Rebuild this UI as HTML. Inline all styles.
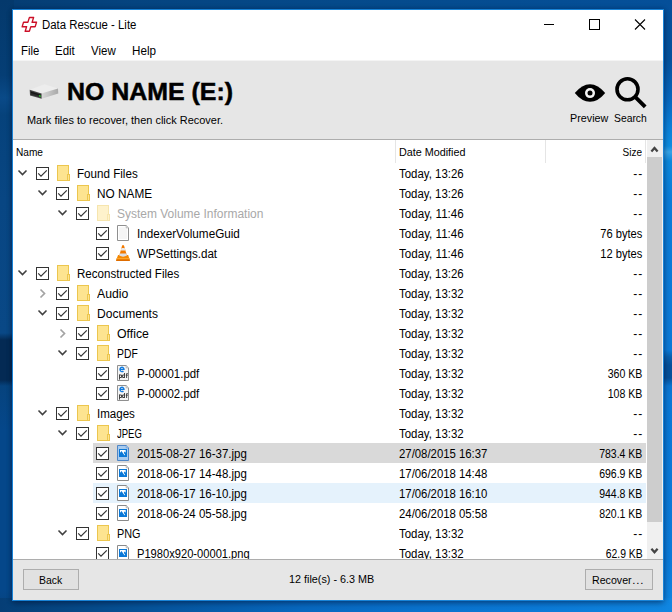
<!DOCTYPE html>
<html><head><meta charset="utf-8"><title>Data Rescue - Lite</title>
<style>
html,body{margin:0;padding:0}
body{width:672px;height:612px;overflow:hidden;position:relative;font-family:"Liberation Sans",sans-serif;background:#0a5fb0}
.a{position:absolute;display:block}
.t{position:absolute;white-space:nowrap;font-family:"Liberation Sans",sans-serif}
.bg{position:absolute}
</style></head><body>

<div class="bg" style="left:0;top:0;width:672px;height:612px;background:linear-gradient(90deg,#053c72 0%,#054480 20%,#054a8b 50%,#05509a 100%)"></div>
<div class="bg" style="left:0;top:0;width:14px;height:612px;background:linear-gradient(180deg,#04396c 0px,#053e75 75px,#0a4a88 98px,#06427b 115px,#084683 200px,#094886 333px,#042a54 340px,#042a54 380px,#06437e 386px,#05478a 430px,#05478a 590px,#06427c 612px)"></div>
<div class="bg" style="left:660px;top:0;width:12px;height:612px;background:linear-gradient(180deg,#054f99 0px,#05529d 60px,#0868bf 100px,#0b80d8 128px,#0e8cdf 146px,#36a2e6 152px,#0d88dc 161px,#0a7cd8 200px,#0a79d7 350px,#0860ad 357px,#05509a 365px,#05509a 378px,#0a74d0 386px,#0a78d6 395px,#0b7ad8 560px,#1086e1 612px)"></div>
<div class="bg" style="left:0;top:598px;width:672px;height:14px;background:linear-gradient(90deg,#053e76 0%,#064784 10%,#06569f 25%,#0868bf 45%,#0a72cd 62%,#0b7ad7 80%,#1086e1 100%)"></div>
<div class="bg" style="left:13px;top:10px;width:650px;height:590px;box-shadow:0 0 5px 1px rgba(0,8,35,.3),0 3px 6px 0 rgba(0,8,35,.35)"></div>
<div class="bg" style="left:12px;top:9px;width:652px;height:592px;background:#1883d7"></div>
<div class="bg" style="left:13px;top:10px;width:650px;height:590px;background:#fff"></div>
<svg class="a" style="left:18px;top:13px" width="24" height="22" viewBox="18 13 24 22"><g transform="translate(29.4,24.3) skewX(-17)"><path d="M-2.1 -6.8 H2.1 V-2.0 H6.5 V2.4 H2.1 V6.9 H-2.1 V2.4 H-6.5 V-2.0 H-2.1 Z" fill="#fff" stroke="#cc0f27" stroke-width="1.4" stroke-linejoin="round"/></g></svg>
<div class="t" style="left:41.60px;transform-origin:0 50%;top:15.20px;font-size:12px;line-height:20px;transform:scaleX(0.9498);color:#000;font-weight:normal;">Data Rescue - Lite</div>
<svg class="a" style="left:543px;top:17.6px" width="104" height="13" viewBox="0 0 104 13"><path d="M1 6.5 H11" stroke="#000" stroke-width="1"/><rect x="46.5" y="1.5" width="10" height="10" fill="none" stroke="#000" stroke-width="1"/><path d="M92 1.5 L102 11.5 M102 1.5 L92 11.5" stroke="#000" stroke-width="1.1"/></svg>
<div class="t" style="left:20.60px;transform-origin:0 50%;top:40.50px;font-size:12px;line-height:20px;transform:scaleX(0.946);color:#000;font-weight:normal;">File</div>
<div class="t" style="left:55.30px;transform-origin:0 50%;top:40.50px;font-size:12px;line-height:20px;transform:scaleX(0.9571);color:#000;font-weight:normal;">Edit</div>
<div class="t" style="left:91.30px;transform-origin:0 50%;top:40.50px;font-size:12px;line-height:20px;transform:scaleX(0.9575);color:#000;font-weight:normal;">View</div>
<div class="t" style="left:131.90px;transform-origin:0 50%;top:40.50px;font-size:12px;line-height:20px;transform:scaleX(0.9722);color:#000;font-weight:normal;">Help</div>
<div class="bg" style="left:13px;top:61px;width:650px;height:78px;background:#e6e6e6"></div>
<div class="bg" style="left:13px;top:60px;width:650px;height:1px;background:#f4f4f4"></div>
<div class="bg" style="left:13px;top:139px;width:650px;height:1px;background:#adadad"></div>
<svg class="a" style="left:28px;top:82px" width="32" height="18" viewBox="0 0 32 18"><defs><linearGradient id="dg" x1="0" y1="0" x2="1" y2="0"><stop offset="0" stop-color="#d8d8d8"/><stop offset="1" stop-color="#a9a9a9"/></linearGradient></defs><path d="M1.7 7.8 L16.5 2.2 L30 6.6 L13.6 11.5 Z" fill="#ededed"/><path d="M13.6 11.5 L30 6.6 L30.3 11.4 L13.6 16.7 Z" fill="url(#dg)"/><path d="M1.7 7.8 L13.6 11.5 L13.6 16.7 L2 13.4 Z" fill="#4a4a4a"/><path d="M2.5 8.9 L12.9 12.2 L12.9 15.6 L2.7 12.7 Z" fill="#2a2a2a"/><path d="M2.9 9.8 L12.5 12.8 L12.5 13.7 L3 10.9 Z" fill="#151515"/><path d="M10.9 13.0 L12.8 13.6 L12.8 15.0 L10.9 14.4 Z" fill="#2fc02f"/></svg>
<div class="t" style="left:66.90px;transform-origin:0 50%;top:76.00px;font-size:24px;line-height:32px;transform:scaleX(1.0376);color:#000;font-weight:bold;-webkit-text-stroke:0.5px #000;">NO NAME (E:)</div>
<div class="t" style="left:27.00px;transform-origin:0 50%;top:109.80px;font-size:11.3px;line-height:20px;transform:scaleX(0.9695);color:#000;font-weight:normal;">Mark files to recover, then click Recover.</div>
<svg class="a" style="left:574px;top:83px" width="32" height="20" viewBox="0 0 32 20"><path d="M0.8 10 Q8 1.2 16 1.2 Q24 1.2 31.2 10 Q24 18.8 16 18.8 Q8 18.8 0.8 10 Z" fill="#000"/><circle cx="16" cy="10.1" r="5.0" fill="#f4f4f4"/><circle cx="16" cy="10.1" r="2.5" fill="#000"/></svg>
<svg class="a" style="left:613px;top:75px" width="34" height="34" viewBox="0 0 34 34"><circle cx="14.5" cy="14.3" r="10.5" fill="none" stroke="#000" stroke-width="3.6"/><path d="M21.9 21.7 L32.2 31.9" stroke="#000" stroke-width="3.9" stroke-linecap="butt"/></svg>
<div class="t" style="left:570.30px;transform-origin:0 50%;top:107.70px;font-size:11.3px;line-height:20px;transform:scaleX(0.953);color:#000;font-weight:normal;">Preview</div>
<div class="t" style="left:614.30px;transform-origin:0 50%;top:107.70px;font-size:11.3px;line-height:20px;transform:scaleX(0.9163);color:#000;font-weight:normal;">Search</div>
<div class="bg" style="left:13px;top:140px;width:634px;height:419px;background:#fff"></div>
<div class="t" style="left:15.90px;transform-origin:0 50%;top:142.00px;font-size:11.3px;line-height:20px;transform:scaleX(0.8958);color:#000;font-weight:normal;">Name</div>
<div class="t" style="left:399.30px;transform-origin:0 50%;top:142.00px;font-size:11.3px;line-height:20px;transform:scaleX(0.954);color:#000;font-weight:normal;">Date Modified</div>
<div class="t" style="right:30.20px;transform-origin:100% 50%;top:142.00px;font-size:11.3px;line-height:20px;transform:scaleX(0.887);color:#000;font-weight:normal;">Size</div>
<div class="bg" style="left:395px;top:140px;width:1px;height:23px;background:#e5e5e5"></div>
<div class="bg" style="left:545px;top:140px;width:1px;height:23px;background:#e5e5e5"></div>
<div class="bg" style="left:645px;top:140px;width:1px;height:23px;background:#e5e5e5"></div>
<svg class="a" style="left:17px;top:169px" width="11" height="8" viewBox="0 0 11 8"><path d="M1.5 1.5 L5.5 5.5 L9.5 1.5" fill="none" stroke="#404040" stroke-width="1.6"/></svg>
<svg class="a" style="left:36px;top:167px" width="13" height="13" viewBox="0 0 13 13"><rect x="0.5" y="0.5" width="12" height="12" fill="#fff" stroke="#333" stroke-width="1"/><path d="M2.2 6.4 L5 9.2 L10.8 3.4" fill="none" stroke="#333" stroke-width="1.2"/></svg>
<svg class="a" style="left:57px;top:165px" width="14" height="16" viewBox="0 0 14 16"><rect x="0.5" y="0.5" width="11" height="15" fill="#fde490" stroke="#ecc64e"/><rect x="10.5" y="9.5" width="2" height="6" fill="#fde490" stroke="#ecc64e"/></svg>
<div class="t" style="left:77.00px;transform-origin:0 50%;top:164.00px;font-size:12px;line-height:20px;transform:scaleX(0.9681);color:#000;font-weight:normal;">Found Files</div>
<div class="t" style="left:399.30px;transform-origin:0 50%;top:164.00px;font-size:12px;line-height:20px;transform:scaleX(0.9539);color:#000;font-weight:normal;">Today, 13:26</div>
<div class="t" style="right:28.7px;top:164.00px;font-size:12px;line-height:20px;letter-spacing:1px">--</div>
<svg class="a" style="left:37px;top:189px" width="11" height="8" viewBox="0 0 11 8"><path d="M1.5 1.5 L5.5 5.5 L9.5 1.5" fill="none" stroke="#404040" stroke-width="1.6"/></svg>
<svg class="a" style="left:56px;top:187px" width="13" height="13" viewBox="0 0 13 13"><rect x="0.5" y="0.5" width="12" height="12" fill="#fff" stroke="#333" stroke-width="1"/><path d="M2.2 6.4 L5 9.2 L10.8 3.4" fill="none" stroke="#333" stroke-width="1.2"/></svg>
<svg class="a" style="left:77px;top:185px" width="14" height="16" viewBox="0 0 14 16"><rect x="0.5" y="0.5" width="11" height="15" fill="#fde490" stroke="#ecc64e"/><rect x="10.5" y="9.5" width="2" height="6" fill="#fde490" stroke="#ecc64e"/></svg>
<div class="t" style="left:97.00px;transform-origin:0 50%;top:184.00px;font-size:12px;line-height:20px;transform:scaleX(0.9837);color:#000;font-weight:normal;">NO NAME</div>
<div class="t" style="left:399.30px;transform-origin:0 50%;top:184.00px;font-size:12px;line-height:20px;transform:scaleX(0.9539);color:#000;font-weight:normal;">Today, 13:26</div>
<div class="t" style="right:28.7px;top:184.00px;font-size:12px;line-height:20px;letter-spacing:1px">--</div>
<svg class="a" style="left:57px;top:209px" width="11" height="8" viewBox="0 0 11 8"><path d="M1.5 1.5 L5.5 5.5 L9.5 1.5" fill="none" stroke="#404040" stroke-width="1.6"/></svg>
<svg class="a" style="left:76px;top:207px" width="13" height="13" viewBox="0 0 13 13"><rect x="0.5" y="0.5" width="12" height="12" fill="#fff" stroke="#333" stroke-width="1"/><path d="M2.2 6.4 L5 9.2 L10.8 3.4" fill="none" stroke="#333" stroke-width="1.2"/></svg>
<svg class="a" style="left:97px;top:205px" width="14" height="16" viewBox="0 0 14 16" opacity="0.45"><rect x="0.5" y="0.5" width="11" height="15" fill="#fde490" stroke="#ecc64e"/><rect x="10.5" y="9.5" width="2" height="6" fill="#fde490" stroke="#ecc64e"/></svg>
<div class="t" style="left:117.00px;transform-origin:0 50%;top:204.00px;font-size:12px;line-height:20px;transform:scaleX(0.9977);color:#a8a8a8;font-weight:normal;">System Volume Information</div>
<div class="t" style="left:399.30px;transform-origin:0 50%;top:204.00px;font-size:12px;line-height:20px;transform:scaleX(0.9666);color:#000;font-weight:normal;">Today, 11:46</div>
<div class="t" style="right:28.7px;top:204.00px;font-size:12px;line-height:20px;letter-spacing:1px">--</div>
<svg class="a" style="left:96px;top:227px" width="13" height="13" viewBox="0 0 13 13"><rect x="0.5" y="0.5" width="12" height="12" fill="#fff" stroke="#333" stroke-width="1"/><path d="M2.2 6.4 L5 9.2 L10.8 3.4" fill="none" stroke="#333" stroke-width="1.2"/></svg>
<svg class="a" style="left:117px;top:225px" width="12" height="16" viewBox="0 0 12 16"><path d="M0.5 0.5 H9.2 L11.5 2.8 V15.5 H0.5 Z" fill="#fff" stroke="#8f8f8f"/><rect x="2" y="2.2" width="8" height="11.8" fill="#f5f5f5"/><path d="M9.2 0.5 V2.8 H11.5" fill="#fff" stroke="#b5b5b5"/></svg>
<div class="t" style="left:137.00px;transform-origin:0 50%;top:224.00px;font-size:12px;line-height:20px;transform:scaleX(0.9762);color:#000;font-weight:normal;">IndexerVolumeGuid</div>
<div class="t" style="left:399.30px;transform-origin:0 50%;top:224.00px;font-size:12px;line-height:20px;transform:scaleX(0.9666);color:#000;font-weight:normal;">Today, 11:46</div>
<div class="t" style="right:29.50px;transform-origin:100% 50%;top:224.00px;font-size:12px;line-height:20px;transform:scaleX(0.9278);color:#000;font-weight:normal;">76 bytes</div>
<svg class="a" style="left:96px;top:247px" width="13" height="13" viewBox="0 0 13 13"><rect x="0.5" y="0.5" width="12" height="12" fill="#fff" stroke="#333" stroke-width="1"/><path d="M2.2 6.4 L5 9.2 L10.8 3.4" fill="none" stroke="#333" stroke-width="1.2"/></svg>
<svg class="a" style="left:116px;top:245px" width="14" height="16" viewBox="0 0 14 16"><path d="M2.1 9.9 H12.2 L13.9 15.2 Q13.9 15.9 13.2 15.9 H0.8 Q0.1 15.9 0.1 15.2 Z" fill="#f58800"/><path d="M0.7 13.0 H13.3 L13.7 14.3 H0.3 Z" fill="#fba42a"/><path d="M0.3 14.4 H13.7 L13.9 15.2 Q13.9 15.9 13.2 15.9 H0.8 Q0.1 15.9 0.1 15.2 Z" fill="#de6c00"/><path d="M6.2 0.2 H7.9 L10.9 10.5 Q7 12.7 3.3 10.5 Z" fill="#f27a00"/><path d="M5.5 2.9 H8.7 L9.5 5.4 H4.7 Z" fill="#e8e9ec"/><path d="M3.9 8.5 H10.4 L11.0 10.6 Q7.1 12.9 3.2 10.6 Z" fill="#dcdfe5"/></svg>
<div class="t" style="left:137.00px;transform-origin:0 50%;top:244.00px;font-size:12px;line-height:20px;transform:scaleX(0.9683);color:#000;font-weight:normal;">WPSettings.dat</div>
<div class="t" style="left:399.30px;transform-origin:0 50%;top:244.00px;font-size:12px;line-height:20px;transform:scaleX(0.9666);color:#000;font-weight:normal;">Today, 11:46</div>
<div class="t" style="right:29.50px;transform-origin:100% 50%;top:244.00px;font-size:12px;line-height:20px;transform:scaleX(0.9278);color:#000;font-weight:normal;">12 bytes</div>
<svg class="a" style="left:17px;top:269px" width="11" height="8" viewBox="0 0 11 8"><path d="M1.5 1.5 L5.5 5.5 L9.5 1.5" fill="none" stroke="#404040" stroke-width="1.6"/></svg>
<svg class="a" style="left:36px;top:267px" width="13" height="13" viewBox="0 0 13 13"><rect x="0.5" y="0.5" width="12" height="12" fill="#fff" stroke="#333" stroke-width="1"/><path d="M2.2 6.4 L5 9.2 L10.8 3.4" fill="none" stroke="#333" stroke-width="1.2"/></svg>
<svg class="a" style="left:57px;top:265px" width="14" height="16" viewBox="0 0 14 16"><rect x="0.5" y="0.5" width="11" height="15" fill="#fde490" stroke="#ecc64e"/><rect x="10.5" y="9.5" width="2" height="6" fill="#fde490" stroke="#ecc64e"/></svg>
<div class="t" style="left:77.00px;transform-origin:0 50%;top:264.00px;font-size:12px;line-height:20px;transform:scaleX(0.9647);color:#000;font-weight:normal;">Reconstructed Files</div>
<div class="t" style="left:399.30px;transform-origin:0 50%;top:264.00px;font-size:12px;line-height:20px;transform:scaleX(0.9539);color:#000;font-weight:normal;">Today, 13:26</div>
<div class="t" style="right:28.7px;top:264.00px;font-size:12px;line-height:20px;letter-spacing:1px">--</div>
<svg class="a" style="left:39.3px;top:288px" width="8" height="11" viewBox="0 0 8 11"><path d="M1.5 1.5 L5.5 5.5 L1.5 9.5" fill="none" stroke="#a3a3a3" stroke-width="1.7"/></svg>
<svg class="a" style="left:56px;top:287px" width="13" height="13" viewBox="0 0 13 13"><rect x="0.5" y="0.5" width="12" height="12" fill="#fff" stroke="#333" stroke-width="1"/><path d="M2.2 6.4 L5 9.2 L10.8 3.4" fill="none" stroke="#333" stroke-width="1.2"/></svg>
<svg class="a" style="left:77px;top:285px" width="14" height="16" viewBox="0 0 14 16"><rect x="0.5" y="0.5" width="11" height="15" fill="#fde490" stroke="#ecc64e"/><rect x="10.5" y="9.5" width="2" height="6" fill="#fde490" stroke="#ecc64e"/></svg>
<div class="t" style="left:97.00px;transform-origin:0 50%;top:284.00px;font-size:12px;line-height:20px;transform:scaleX(1.0194);color:#000;font-weight:normal;">Audio</div>
<div class="t" style="left:399.30px;transform-origin:0 50%;top:284.00px;font-size:12px;line-height:20px;transform:scaleX(0.9539);color:#000;font-weight:normal;">Today, 13:32</div>
<div class="t" style="right:28.7px;top:284.00px;font-size:12px;line-height:20px;letter-spacing:1px">--</div>
<svg class="a" style="left:37px;top:309px" width="11" height="8" viewBox="0 0 11 8"><path d="M1.5 1.5 L5.5 5.5 L9.5 1.5" fill="none" stroke="#404040" stroke-width="1.6"/></svg>
<svg class="a" style="left:56px;top:307px" width="13" height="13" viewBox="0 0 13 13"><rect x="0.5" y="0.5" width="12" height="12" fill="#fff" stroke="#333" stroke-width="1"/><path d="M2.2 6.4 L5 9.2 L10.8 3.4" fill="none" stroke="#333" stroke-width="1.2"/></svg>
<svg class="a" style="left:77px;top:305px" width="14" height="16" viewBox="0 0 14 16"><rect x="0.5" y="0.5" width="11" height="15" fill="#fde490" stroke="#ecc64e"/><rect x="10.5" y="9.5" width="2" height="6" fill="#fde490" stroke="#ecc64e"/></svg>
<div class="t" style="left:97.00px;transform-origin:0 50%;top:304.00px;font-size:12px;line-height:20px;transform:scaleX(1.0049);color:#000;font-weight:normal;">Documents</div>
<div class="t" style="left:399.30px;transform-origin:0 50%;top:304.00px;font-size:12px;line-height:20px;transform:scaleX(0.9539);color:#000;font-weight:normal;">Today, 13:32</div>
<div class="t" style="right:28.7px;top:304.00px;font-size:12px;line-height:20px;letter-spacing:1px">--</div>
<svg class="a" style="left:59.3px;top:328px" width="8" height="11" viewBox="0 0 8 11"><path d="M1.5 1.5 L5.5 5.5 L1.5 9.5" fill="none" stroke="#a3a3a3" stroke-width="1.7"/></svg>
<svg class="a" style="left:76px;top:327px" width="13" height="13" viewBox="0 0 13 13"><rect x="0.5" y="0.5" width="12" height="12" fill="#fff" stroke="#333" stroke-width="1"/><path d="M2.2 6.4 L5 9.2 L10.8 3.4" fill="none" stroke="#333" stroke-width="1.2"/></svg>
<svg class="a" style="left:97px;top:325px" width="14" height="16" viewBox="0 0 14 16"><rect x="0.5" y="0.5" width="11" height="15" fill="#fde490" stroke="#ecc64e"/><rect x="10.5" y="9.5" width="2" height="6" fill="#fde490" stroke="#ecc64e"/></svg>
<div class="t" style="left:117.00px;transform-origin:0 50%;top:324.00px;font-size:12px;line-height:20px;transform:scaleX(1.0249);color:#000;font-weight:normal;">Office</div>
<div class="t" style="left:399.30px;transform-origin:0 50%;top:324.00px;font-size:12px;line-height:20px;transform:scaleX(0.9539);color:#000;font-weight:normal;">Today, 13:32</div>
<div class="t" style="right:28.7px;top:324.00px;font-size:12px;line-height:20px;letter-spacing:1px">--</div>
<svg class="a" style="left:57px;top:349px" width="11" height="8" viewBox="0 0 11 8"><path d="M1.5 1.5 L5.5 5.5 L9.5 1.5" fill="none" stroke="#404040" stroke-width="1.6"/></svg>
<svg class="a" style="left:76px;top:347px" width="13" height="13" viewBox="0 0 13 13"><rect x="0.5" y="0.5" width="12" height="12" fill="#fff" stroke="#333" stroke-width="1"/><path d="M2.2 6.4 L5 9.2 L10.8 3.4" fill="none" stroke="#333" stroke-width="1.2"/></svg>
<svg class="a" style="left:97px;top:345px" width="14" height="16" viewBox="0 0 14 16"><rect x="0.5" y="0.5" width="11" height="15" fill="#fde490" stroke="#ecc64e"/><rect x="10.5" y="9.5" width="2" height="6" fill="#fde490" stroke="#ecc64e"/></svg>
<div class="t" style="left:117.00px;transform-origin:0 50%;top:344.00px;font-size:12px;line-height:20px;transform:scaleX(0.8625);color:#000;font-weight:normal;">PDF</div>
<div class="t" style="left:399.30px;transform-origin:0 50%;top:344.00px;font-size:12px;line-height:20px;transform:scaleX(0.9539);color:#000;font-weight:normal;">Today, 13:32</div>
<div class="t" style="right:28.7px;top:344.00px;font-size:12px;line-height:20px;letter-spacing:1px">--</div>
<svg class="a" style="left:96px;top:367px" width="13" height="13" viewBox="0 0 13 13"><rect x="0.5" y="0.5" width="12" height="12" fill="#fff" stroke="#333" stroke-width="1"/><path d="M2.2 6.4 L5 9.2 L10.8 3.4" fill="none" stroke="#333" stroke-width="1.2"/></svg>
<svg class="a" style="left:117px;top:365px" width="12" height="16" viewBox="0 0 12 16"><path d="M0.5 0.5 H9.2 L11.5 2.8 V15.5 H0.5 Z" fill="#f4f4f4" stroke="#8f8f8f"/><path d="M9.2 0.5 V2.8 H11.5" fill="#fff" stroke="#b5b5b5"/><path d="M3.1 4.4 H7.0 A2.0 2.2 0 1 0 6.4 6.0" fill="none" stroke="#0f7ae0" stroke-width="1.35"/><path d="M2.5 9.5 V14.6 M2.5 10 H4.5 V12.5 H2.5 M7.5 8 V13 M7.5 10 H5.6 V12.5 H7.5 M9.6 13 V8.6 H10.8 M8.8 10.2 H10.8" fill="none" stroke="#3c3c3c" stroke-width="0.95"/></svg>
<div class="t" style="left:137.00px;transform-origin:0 50%;top:364.00px;font-size:12px;line-height:20px;transform:scaleX(0.9527);color:#000;font-weight:normal;">P-00001.pdf</div>
<div class="t" style="left:399.30px;transform-origin:0 50%;top:364.00px;font-size:12px;line-height:20px;transform:scaleX(0.9539);color:#000;font-weight:normal;">Today, 13:32</div>
<div class="t" style="right:29.50px;transform-origin:100% 50%;top:364.00px;font-size:12px;line-height:20px;transform:scaleX(0.8813);color:#000;font-weight:normal;">360 KB</div>
<svg class="a" style="left:96px;top:387px" width="13" height="13" viewBox="0 0 13 13"><rect x="0.5" y="0.5" width="12" height="12" fill="#fff" stroke="#333" stroke-width="1"/><path d="M2.2 6.4 L5 9.2 L10.8 3.4" fill="none" stroke="#333" stroke-width="1.2"/></svg>
<svg class="a" style="left:117px;top:385px" width="12" height="16" viewBox="0 0 12 16"><path d="M0.5 0.5 H9.2 L11.5 2.8 V15.5 H0.5 Z" fill="#f4f4f4" stroke="#8f8f8f"/><path d="M9.2 0.5 V2.8 H11.5" fill="#fff" stroke="#b5b5b5"/><path d="M3.1 4.4 H7.0 A2.0 2.2 0 1 0 6.4 6.0" fill="none" stroke="#0f7ae0" stroke-width="1.35"/><path d="M2.5 9.5 V14.6 M2.5 10 H4.5 V12.5 H2.5 M7.5 8 V13 M7.5 10 H5.6 V12.5 H7.5 M9.6 13 V8.6 H10.8 M8.8 10.2 H10.8" fill="none" stroke="#3c3c3c" stroke-width="0.95"/></svg>
<div class="t" style="left:137.00px;transform-origin:0 50%;top:384.00px;font-size:12px;line-height:20px;transform:scaleX(0.9527);color:#000;font-weight:normal;">P-00002.pdf</div>
<div class="t" style="left:399.30px;transform-origin:0 50%;top:384.00px;font-size:12px;line-height:20px;transform:scaleX(0.9539);color:#000;font-weight:normal;">Today, 13:32</div>
<div class="t" style="right:29.50px;transform-origin:100% 50%;top:384.00px;font-size:12px;line-height:20px;transform:scaleX(0.8813);color:#000;font-weight:normal;">108 KB</div>
<svg class="a" style="left:37px;top:409px" width="11" height="8" viewBox="0 0 11 8"><path d="M1.5 1.5 L5.5 5.5 L9.5 1.5" fill="none" stroke="#404040" stroke-width="1.6"/></svg>
<svg class="a" style="left:56px;top:407px" width="13" height="13" viewBox="0 0 13 13"><rect x="0.5" y="0.5" width="12" height="12" fill="#fff" stroke="#333" stroke-width="1"/><path d="M2.2 6.4 L5 9.2 L10.8 3.4" fill="none" stroke="#333" stroke-width="1.2"/></svg>
<svg class="a" style="left:77px;top:405px" width="14" height="16" viewBox="0 0 14 16"><rect x="0.5" y="0.5" width="11" height="15" fill="#fde490" stroke="#ecc64e"/><rect x="10.5" y="9.5" width="2" height="6" fill="#fde490" stroke="#ecc64e"/></svg>
<div class="t" style="left:97.00px;transform-origin:0 50%;top:404.00px;font-size:12px;line-height:20px;transform:scaleX(0.9629);color:#000;font-weight:normal;">Images</div>
<div class="t" style="left:399.30px;transform-origin:0 50%;top:404.00px;font-size:12px;line-height:20px;transform:scaleX(0.9539);color:#000;font-weight:normal;">Today, 13:32</div>
<div class="t" style="right:28.7px;top:404.00px;font-size:12px;line-height:20px;letter-spacing:1px">--</div>
<svg class="a" style="left:57px;top:429px" width="11" height="8" viewBox="0 0 11 8"><path d="M1.5 1.5 L5.5 5.5 L9.5 1.5" fill="none" stroke="#404040" stroke-width="1.6"/></svg>
<svg class="a" style="left:76px;top:427px" width="13" height="13" viewBox="0 0 13 13"><rect x="0.5" y="0.5" width="12" height="12" fill="#fff" stroke="#333" stroke-width="1"/><path d="M2.2 6.4 L5 9.2 L10.8 3.4" fill="none" stroke="#333" stroke-width="1.2"/></svg>
<svg class="a" style="left:97px;top:425px" width="14" height="16" viewBox="0 0 14 16"><rect x="0.5" y="0.5" width="11" height="15" fill="#fde490" stroke="#ecc64e"/><rect x="10.5" y="9.5" width="2" height="6" fill="#fde490" stroke="#ecc64e"/></svg>
<div class="t" style="left:117.00px;transform-origin:0 50%;top:424.00px;font-size:12px;line-height:20px;transform:scaleX(0.7912);color:#000;font-weight:normal;">JPEG</div>
<div class="t" style="left:399.30px;transform-origin:0 50%;top:424.00px;font-size:12px;line-height:20px;transform:scaleX(0.9539);color:#000;font-weight:normal;">Today, 13:32</div>
<div class="t" style="right:28.7px;top:424.00px;font-size:12px;line-height:20px;letter-spacing:1px">--</div>
<div class="bg" style="left:93px;top:443px;width:553px;height:20px;background:#d9d9d9"></div>
<svg class="a" style="left:96px;top:447px" width="13" height="13" viewBox="0 0 13 13"><rect x="0.5" y="0.5" width="12" height="12" fill="#fff" stroke="#333" stroke-width="1"/><path d="M2.2 6.4 L5 9.2 L10.8 3.4" fill="none" stroke="#333" stroke-width="1.2"/></svg>
<svg class="a" style="left:117px;top:445px" width="12" height="16" viewBox="0 0 12 16"><path d="M0.5 0.5 H9.2 L11.5 2.8 V15.5 H0.5 Z" fill="#a9cbee" stroke="#4f86c6"/><path d="M9.2 0.5 V2.8 H11.5" fill="#cfe2f6" stroke="#4f86c6" stroke-opacity="0.6"/><rect x="2" y="4" width="8" height="8" fill="#0a78d7"/><path d="M3 5 H8.7 V7.8 L7.6 6.6 L6.8 7.8 L8.1 10 L7.4 10.3 L5.2 6.9 L4.5 5.9 L3.3 7.6 L3 7.6 Z" fill="#fff"/></svg>
<div class="t" style="left:137.00px;transform-origin:0 50%;top:444.00px;font-size:12px;line-height:20px;transform:scaleX(0.9567);color:#000;font-weight:normal;">2015-08-27 16-37.jpg</div>
<div class="t" style="left:399.30px;transform-origin:0 50%;top:444.00px;font-size:12px;line-height:20px;transform:scaleX(0.9462);color:#000;font-weight:normal;">27/08/2015 16:37</div>
<div class="t" style="right:29.50px;transform-origin:100% 50%;top:444.00px;font-size:12px;line-height:20px;transform:scaleX(0.8749);color:#000;font-weight:normal;">783.4 KB</div>
<svg class="a" style="left:96px;top:467px" width="13" height="13" viewBox="0 0 13 13"><rect x="0.5" y="0.5" width="12" height="12" fill="#fff" stroke="#333" stroke-width="1"/><path d="M2.2 6.4 L5 9.2 L10.8 3.4" fill="none" stroke="#333" stroke-width="1.2"/></svg>
<svg class="a" style="left:117px;top:465px" width="12" height="16" viewBox="0 0 12 16"><path d="M0.5 0.5 H9.2 L11.5 2.8 V15.5 H0.5 Z" fill="#ffffff" stroke="#8a8a8a"/><path d="M9.2 0.5 V2.8 H11.5" fill="#fff" stroke="#8a8a8a" stroke-opacity="0.6"/><rect x="2" y="4" width="8" height="8" fill="#0a78d7"/><path d="M3 5 H8.7 V7.8 L7.6 6.6 L6.8 7.8 L8.1 10 L7.4 10.3 L5.2 6.9 L4.5 5.9 L3.3 7.6 L3 7.6 Z" fill="#fff"/></svg>
<div class="t" style="left:137.00px;transform-origin:0 50%;top:464.00px;font-size:12px;line-height:20px;transform:scaleX(0.9567);color:#000;font-weight:normal;">2018-06-17 14-48.jpg</div>
<div class="t" style="left:399.30px;transform-origin:0 50%;top:464.00px;font-size:12px;line-height:20px;transform:scaleX(0.9462);color:#000;font-weight:normal;">17/06/2018 14:48</div>
<div class="t" style="right:29.50px;transform-origin:100% 50%;top:464.00px;font-size:12px;line-height:20px;transform:scaleX(0.8749);color:#000;font-weight:normal;">696.9 KB</div>
<div class="bg" style="left:93px;top:483px;width:553px;height:20px;background:#e5f2fc"></div>
<svg class="a" style="left:96px;top:487px" width="13" height="13" viewBox="0 0 13 13"><rect x="0.5" y="0.5" width="12" height="12" fill="#fff" stroke="#333" stroke-width="1"/><path d="M2.2 6.4 L5 9.2 L10.8 3.4" fill="none" stroke="#333" stroke-width="1.2"/></svg>
<svg class="a" style="left:117px;top:485px" width="12" height="16" viewBox="0 0 12 16"><path d="M0.5 0.5 H9.2 L11.5 2.8 V15.5 H0.5 Z" fill="#ffffff" stroke="#8a8a8a"/><path d="M9.2 0.5 V2.8 H11.5" fill="#fff" stroke="#8a8a8a" stroke-opacity="0.6"/><rect x="2" y="4" width="8" height="8" fill="#0a78d7"/><path d="M3 5 H8.7 V7.8 L7.6 6.6 L6.8 7.8 L8.1 10 L7.4 10.3 L5.2 6.9 L4.5 5.9 L3.3 7.6 L3 7.6 Z" fill="#fff"/></svg>
<div class="t" style="left:137.00px;transform-origin:0 50%;top:484.00px;font-size:12px;line-height:20px;transform:scaleX(0.9567);color:#000;font-weight:normal;">2018-06-17 16-10.jpg</div>
<div class="t" style="left:399.30px;transform-origin:0 50%;top:484.00px;font-size:12px;line-height:20px;transform:scaleX(0.9462);color:#000;font-weight:normal;">17/06/2018 16:10</div>
<div class="t" style="right:29.50px;transform-origin:100% 50%;top:484.00px;font-size:12px;line-height:20px;transform:scaleX(0.8749);color:#000;font-weight:normal;">944.8 KB</div>
<svg class="a" style="left:96px;top:507px" width="13" height="13" viewBox="0 0 13 13"><rect x="0.5" y="0.5" width="12" height="12" fill="#fff" stroke="#333" stroke-width="1"/><path d="M2.2 6.4 L5 9.2 L10.8 3.4" fill="none" stroke="#333" stroke-width="1.2"/></svg>
<svg class="a" style="left:117px;top:505px" width="12" height="16" viewBox="0 0 12 16"><path d="M0.5 0.5 H9.2 L11.5 2.8 V15.5 H0.5 Z" fill="#ffffff" stroke="#8a8a8a"/><path d="M9.2 0.5 V2.8 H11.5" fill="#fff" stroke="#8a8a8a" stroke-opacity="0.6"/><rect x="2" y="4" width="8" height="8" fill="#0a78d7"/><path d="M3 5 H8.7 V7.8 L7.6 6.6 L6.8 7.8 L8.1 10 L7.4 10.3 L5.2 6.9 L4.5 5.9 L3.3 7.6 L3 7.6 Z" fill="#fff"/></svg>
<div class="t" style="left:137.00px;transform-origin:0 50%;top:504.00px;font-size:12px;line-height:20px;transform:scaleX(0.9567);color:#000;font-weight:normal;">2018-06-24 05-58.jpg</div>
<div class="t" style="left:399.30px;transform-origin:0 50%;top:504.00px;font-size:12px;line-height:20px;transform:scaleX(0.9462);color:#000;font-weight:normal;">24/06/2018 05:58</div>
<div class="t" style="right:29.50px;transform-origin:100% 50%;top:504.00px;font-size:12px;line-height:20px;transform:scaleX(0.8749);color:#000;font-weight:normal;">820.1 KB</div>
<svg class="a" style="left:57px;top:529px" width="11" height="8" viewBox="0 0 11 8"><path d="M1.5 1.5 L5.5 5.5 L9.5 1.5" fill="none" stroke="#404040" stroke-width="1.6"/></svg>
<svg class="a" style="left:76px;top:527px" width="13" height="13" viewBox="0 0 13 13"><rect x="0.5" y="0.5" width="12" height="12" fill="#fff" stroke="#333" stroke-width="1"/><path d="M2.2 6.4 L5 9.2 L10.8 3.4" fill="none" stroke="#333" stroke-width="1.2"/></svg>
<svg class="a" style="left:97px;top:525px" width="14" height="16" viewBox="0 0 14 16"><rect x="0.5" y="0.5" width="11" height="15" fill="#fde490" stroke="#ecc64e"/><rect x="10.5" y="9.5" width="2" height="6" fill="#fde490" stroke="#ecc64e"/></svg>
<div class="t" style="left:117.00px;transform-origin:0 50%;top:524.00px;font-size:12px;line-height:20px;transform:scaleX(0.9033);color:#000;font-weight:normal;">PNG</div>
<div class="t" style="left:399.30px;transform-origin:0 50%;top:524.00px;font-size:12px;line-height:20px;transform:scaleX(0.9539);color:#000;font-weight:normal;">Today, 13:32</div>
<div class="t" style="right:28.7px;top:524.00px;font-size:12px;line-height:20px;letter-spacing:1px">--</div>
<svg class="a" style="left:96px;top:547px" width="13" height="13" viewBox="0 0 13 13"><rect x="0.5" y="0.5" width="12" height="12" fill="#fff" stroke="#333" stroke-width="1"/><path d="M2.2 6.4 L5 9.2 L10.8 3.4" fill="none" stroke="#333" stroke-width="1.2"/></svg>
<svg class="a" style="left:117px;top:545px" width="12" height="16" viewBox="0 0 12 16"><path d="M0.5 0.5 H9.2 L11.5 2.8 V15.5 H0.5 Z" fill="#ffffff" stroke="#8a8a8a"/><path d="M9.2 0.5 V2.8 H11.5" fill="#fff" stroke="#8a8a8a" stroke-opacity="0.6"/><rect x="2" y="4" width="8" height="8" fill="#0a78d7"/><path d="M3 5 H8.7 V7.8 L7.6 6.6 L6.8 7.8 L8.1 10 L7.4 10.3 L5.2 6.9 L4.5 5.9 L3.3 7.6 L3 7.6 Z" fill="#fff"/></svg>
<div class="t" style="left:137.00px;transform-origin:0 50%;top:544.00px;font-size:12px;line-height:20px;transform:scaleX(0.9279);color:#000;font-weight:normal;">P1980x920-00001.png</div>
<div class="t" style="left:399.30px;transform-origin:0 50%;top:544.00px;font-size:12px;line-height:20px;transform:scaleX(0.9539);color:#000;font-weight:normal;">Today, 13:32</div>
<div class="t" style="right:29.50px;transform-origin:100% 50%;top:544.00px;font-size:12px;line-height:20px;transform:scaleX(0.8641);color:#000;font-weight:normal;">62.9 KB</div>
<div class="bg" style="left:647px;top:140px;width:16px;height:419px;background:#f0f0f0"></div>
<div class="bg" style="left:647px;top:157px;width:15px;height:365px;background:#cdcdcd"></div>
<svg class="a" style="left:650px;top:145px" width="10" height="9" viewBox="0 0 10 9"><path d="M1.4 6.4 L4.5 3.0 L7.6 6.4" fill="none" stroke="#444" stroke-width="2.3"/></svg>
<svg class="a" style="left:650px;top:546px" width="10" height="9" viewBox="0 0 10 9"><path d="M1.4 2.8 L4.5 6.2 L7.6 2.8" fill="none" stroke="#444" stroke-width="2.3"/></svg>
<div class="bg" style="left:13px;top:559px;width:650px;height:41px;background:#e6e6e6"></div>
<div class="bg" style="left:13px;top:559px;width:650px;height:1px;background:#adadad"></div>
<div class="bg" style="left:23px;top:569px;width:54px;height:19px;background:#e1e1e1;border:1px solid #adadad"></div>
<div class="t" style="left:38.90px;transform-origin:0 50%;top:569.60px;font-size:11.3px;line-height:20px;transform:scaleX(0.9234);color:#000;font-weight:normal;">Back</div>
<div class="bg" style="left:585px;top:569px;width:66px;height:19px;background:#e1e1e1;border:1px solid #adadad"></div>
<div class="t" style="left:592.00px;transform-origin:0 50%;top:569.60px;font-size:11.3px;line-height:20px;transform:scaleX(0.9411);color:#000;font-weight:normal;">Recover</div>
<div class="t" style="left:632.3px;top:569.6px;font-size:11.3px;line-height:20px;letter-spacing:0.9px">...</div>
<div class="t" style="left:289.20px;transform-origin:0 50%;top:569.40px;font-size:11.3px;line-height:20px;transform:scaleX(0.9556);color:#000;font-weight:normal;">12 file(s) - 6.3 MB</div>
</body></html>
